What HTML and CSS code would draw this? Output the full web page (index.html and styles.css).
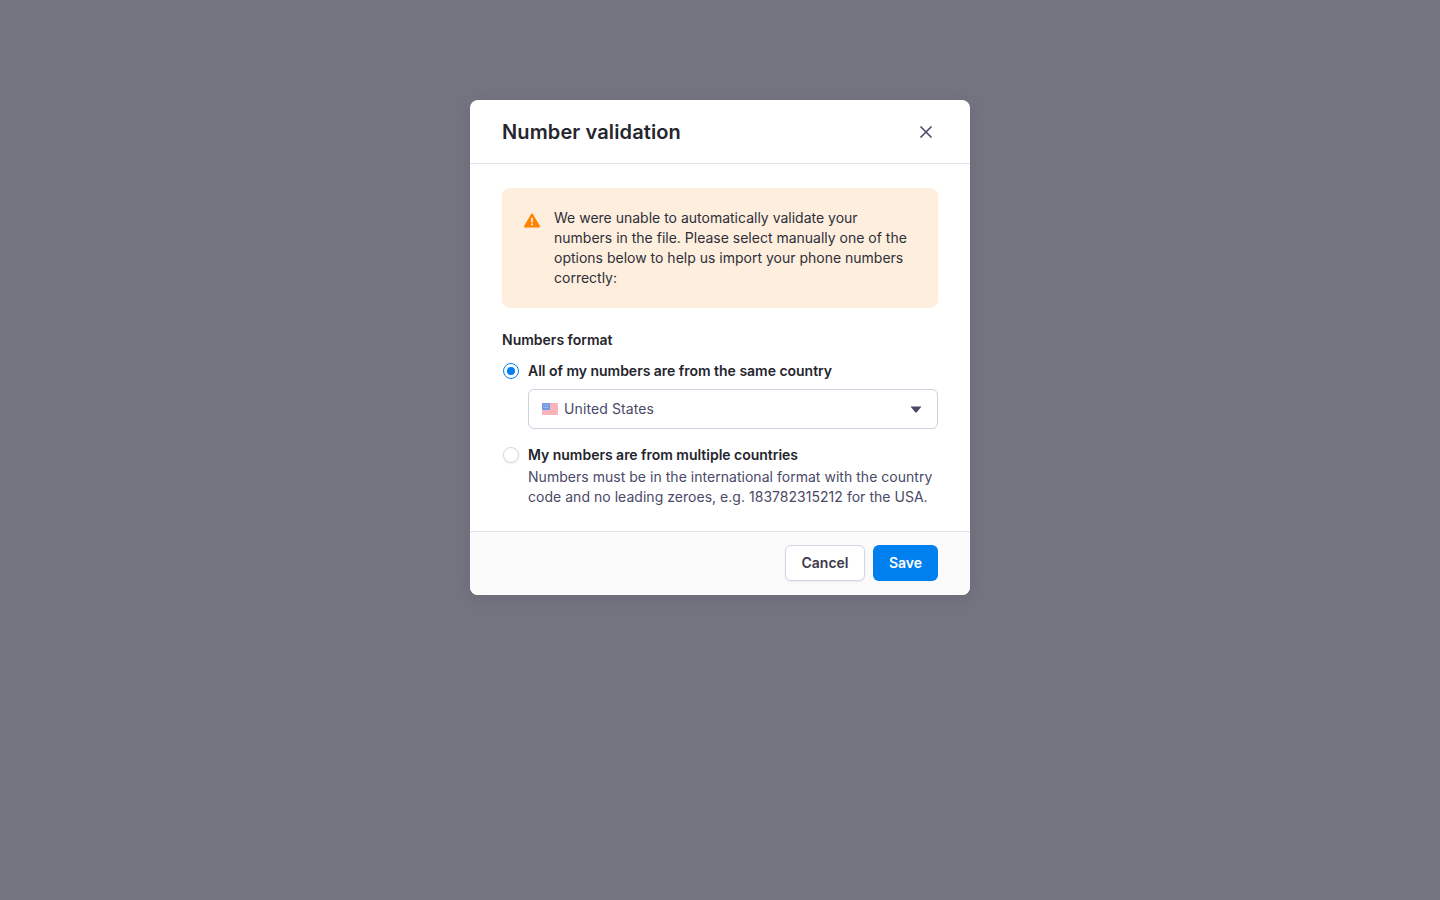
FILE: index.html
```html
<!DOCTYPE html>
<html lang="en">
<head>
  <meta charset="UTF-8" />
  <title>Number validation</title>
  <link rel="stylesheet" href="styles.css">
</head>
<body>
  <div class="modal">
    <header class="modal-head">
      <h1>Number validation</h1>
      <button class="close" type="button" aria-label="Close">
        <svg width="16" height="16" viewBox="0 0 16 16"><path d="M2.500 2.500l11 11M13.500 2.500l-11 11" fill="none" stroke="#4a4a68" stroke-width="1.6"/></svg>
      </button>
    </header>
    <div class="modal-body">
      <div class="alert">
        <svg class="alert-icon" width="16" height="15" viewBox="0 0 16 15"><path d="M8 1.800L14.700 13.400H1.300z" fill="#ff8200" stroke="#ff8200" stroke-width="2.400" stroke-linejoin="round"/><rect x="7.100" y="4.800" width="1.800" height="4.600" fill="#fdeedd"/><rect x="7.100" y="10.500" width="1.800" height="1.800" fill="#fdeedd"/></svg>
        <p>We were unable to automatically validate your numbers in the file. Please select manually one of the options below to help us import your phone numbers correctly:</p>
      </div>
      <div class="field-label">Numbers format</div>
      <div class="option">
        <span class="radio checked"></span>
        <span class="option-label">All of my numbers are from the same country</span>
      </div>
      <div class="select">
        <svg class="flag" width="16" height="12" viewBox="0 0 16 12">
          <rect width="16" height="12" rx="1" fill="#fbdcdf"/>
          <path d="M0 1h16M0 3h16M0 5h16M0 7h16M0 9h16M0 11h16" stroke="#f58a97" stroke-width="1"/>
          <rect width="8" height="7" rx="1" fill="#6e97e8"/>
          <path d="M1.500 2h1M3.500 2h1M5.500 2h1M1.500 4.500h1M3.500 4.500h1M5.500 4.500h1" stroke="#c5d6f7" stroke-width="1"/>
        </svg>
        <span class="select-value">United States</span>
        <svg class="caret" width="12" height="7" viewBox="0 0 12 7"><path d="M.5.500h11L6.800 6.200c-.4.500-1.200.500-1.600 0z" fill="#4a4a68"/></svg>
      </div>
      <div class="option option-second">
        <span class="radio"></span>
        <span class="option-label">My numbers are from multiple countries</span>
      </div>
      <p class="hint">Numbers must be in the international format with the country code and no leading zeroes, e.g. 183782315212 for the USA.</p>
    </div>
    <footer class="modal-foot">
      <button class="btn btn-cancel" type="button">Cancel</button>
      <button class="btn btn-save" type="button">Save</button>
    </footer>
  </div>
</body>
</html>
```

FILE: styles.css
```css
:root {
  --dark: #25252d;
  --muted: #4a4a68;
  --line: #e3e3ee;
  --blue: #0080ee;
}
* {
  box-sizing: border-box;
}
body {
  margin: 0;
  height: 900px;
  overflow: hidden;
  background: #747481;
  font-family: Inter, 'Liberation Sans', sans-serif;
  color: var(--dark);
  padding-top: 100px;
}
.modal {
  width: 500px;
  height: 495px;
  margin: 0 auto;
  background: #fff;
  border-radius: 8px;
  overflow: hidden;
  box-shadow: 0 4px 16px rgba(37, 37, 45, 0.1);
}
.modal-head {
  height: 64px;
  display: flex;
  align-items: center;
  justify-content: space-between;
  padding: 0 36px 0 32px;
  border-bottom: 1px solid var(--line);
}
.modal-head h1 {
  margin: 0;
  font-size: 20px;
  line-height: 28px;
  font-weight: 600;
  letter-spacing: 0.12px;
}
.close {
  display: flex;
  padding: 0;
  border: none;
  background: none;
}
.modal-body {
  height: 367px;
  padding: 24px 32px 0;
}
.alert {
  display: flex;
  gap: 14px;
  height: 120px;
  padding: 20px 22px;
  background: #fdeedd;
  border-radius: 8px;
}
.alert-icon {
  flex: none;
  margin-top: 5px;
}
.alert p {
  margin: 0;
  font-size: 14px;
  line-height: 20px;
  color: #2f2f3a;
}
.field-label {
  margin-top: 22px;
  font-size: 14px;
  line-height: 20px;
  font-weight: 600;
}
.option {
  display: flex;
  align-items: center;
  gap: 9px;
  margin-top: 11px;
  padding-left: 1px;
}
.option-second {
  margin-top: 16px;
}
.option-label {
  font-size: 14px;
  line-height: 20px;
  font-weight: 600;
  letter-spacing: -0.02px;
}
.radio {
  width: 16px;
  height: 16px;
  flex: none;
  border-radius: 50%;
  border: 1px solid #d5d5e8;
  background: #fff;
  box-shadow: 0 1px 2px rgba(37, 37, 45, 0.08);
}
.radio.checked {
  border: 1.5px solid var(--blue);
  box-shadow: none;
  display: flex;
  align-items: center;
  justify-content: center;
}
.radio.checked::after {
  content: "";
  width: 8px;
  height: 8px;
  border-radius: 50%;
  background: var(--blue);
}
.select {
  display: flex;
  align-items: center;
  height: 40px;
  margin: 8px 0 0 26px;
  padding: 0 15px 0 13px;
  border: 1px solid #d0d0de;
  border-radius: 6px;
}
.flag {
  flex: none;
}
.select-value {
  flex: 1;
  margin-left: 6px;
  font-size: 14px;
  line-height: 20px;
  letter-spacing: 0.1px;
  color: var(--muted);
}
.hint {
  margin: 2px 0 0 26px;
  font-size: 14px;
  line-height: 20px;
  letter-spacing: 0.03px;
  color: var(--muted);
}
.modal-foot {
  height: 64px;
  display: flex;
  justify-content: flex-end;
  align-items: center;
  gap: 8px;
  padding: 0 32px 1px;
  background: #fbfbfc;
  border-top: 1px solid var(--line);
}
.btn {
  height: 36px;
  padding: 0 0 2px;
  border-radius: 6px;
  font-family: inherit;
  font-size: 14px;
  font-weight: 600;
}
.btn-cancel {
  width: 80px;
  background: #fff;
  border: 1px solid #d5d5e8;
  color: #3a3a4a;
  box-shadow: 0 1px 2px rgba(37, 37, 45, 0.08);
}
.btn-save {
  width: 65px;
  background: var(--blue);
  border: none;
  color: #fff;
}
```
